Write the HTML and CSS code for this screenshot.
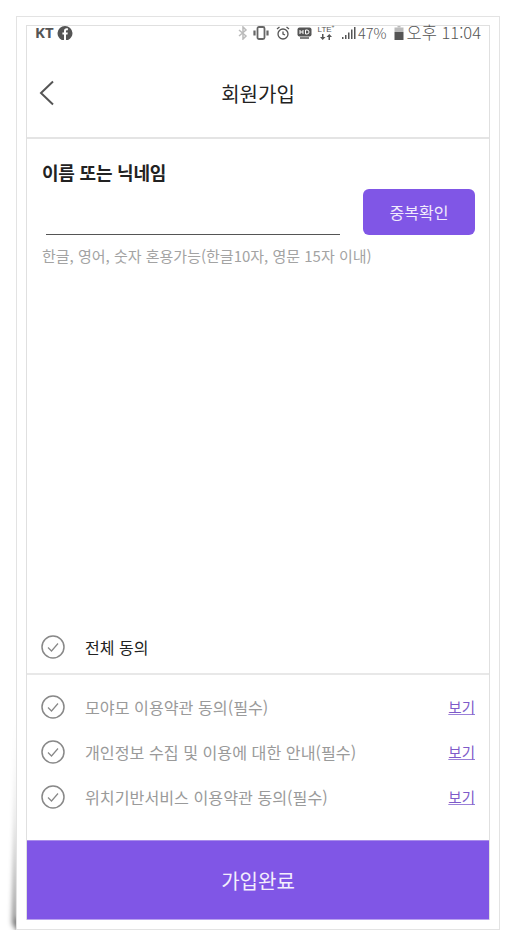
FILE: index.html
```html
<!DOCTYPE html>
<html lang="ko">
<head>
    <meta charset="UTF-8">
    <meta name="viewport" content="width=device-width, initial-scale=1.0">
    <title>회원가입</title>
    <link rel="stylesheet" href="styles.css">
</head>
<body>
    <div class="photo-frame">
        <div class="curl-shadow"></div>
        <div class="screen">
            <div class="status-bar">
                <div class="status-left">
                    <span class="carrier">KT</span>
                    <svg class="fb-icon" width="16" height="14" viewBox="0 0 16 14">
                        <path d="M8 0a7.5 7.5 0 0 1 7.5 7c0 3-1.6 5.600-4.500 7H4.800C2 12.600 .5 10 .5 7A7.500 7.500 0 0 1 8 0z" fill="#555"/>
                        <path d="M7 14V8.500H5.400V6.400H7V5c0-1.800 1-2.700 2.600-2.700h1.300v2H10c-.7 0-1 .3-1 1v1.100h1.800l-.3 2.100H9V14z" fill="#fff"/>
                    </svg>
                </div>
                <div class="status-right">
                    <svg width="10" height="14" viewBox="0 0 10 14" fill="none" stroke="#bbb" stroke-width="1.500"><path d="M1 4l7 6-3 3V1l3 3-7 6"/></svg>
                    <svg class="vibrate-icon" width="16" height="14" viewBox="0 0 16 14" fill="none" stroke="#666"><rect x="4.500" y="1" width="7" height="12" rx="1.500" stroke-width="1.800"/><path d="M1.500 4.500v5M14.500 4.500v5" stroke-width="2.200"/></svg>
                    <svg class="alarm-icon" width="14" height="14" viewBox="0 0 14 14" fill="none" stroke="#555" stroke-width="1.300"><circle cx="7" cy="8" r="5"/><path d="M7 5.500V8l2 1M1 3l2.500-2M13 3l-2.500-2"/></svg>
                    <svg class="hd-icon" width="15" height="14" viewBox="0 0 15 14"><rect x=".5" y="1.500" width="14" height="9" rx="2" fill="#555"/><path d="M3 12h9" stroke="#555" stroke-width="1.500"/><path d="M3 4v4M6 4v4M3 6h3M8.500 4v4h1.500a2 2 0 0 0 0-4z" fill="none" stroke="#fff"/></svg>
                    <div class="lte">
                        <span class="lte-text">LTE<sup>+</sup></span>
                        <svg width="14" height="6" viewBox="0 0 14 6" fill="#555"><path d="M3 0h1.500v3H6.500L3.700 6 1 3h2zM9.500 6H11V3h2L10.300 0 7.500 3h2z"/></svg>
                    </div>
                    <svg class="signal" width="15" height="14" viewBox="0 0 15 14" fill="#555"><path d="M1 11h1.500v2H1zM4 9h1.500v4H4zM7 6.500h1.500V13H7zM10 3.500h1.500V13H10zM13 1h1.500v12H13z"/></svg>
                    <span class="status-text percent">47%</span>
                    <svg class="battery" width="10" height="14" viewBox="0 0 10 14"><path d="M3.500 0h3v1.500h-3z" fill="#bbb"/><path d="M.5 1.500h9V6h-9z" fill="#bbb"/><path d="M.5 6h9v8h-9z" fill="#555"/></svg>
                    <span class="status-text clock">오후 11:04</span>
                </div>
            </div>

            <header class="top-bar">
                <svg class="back-icon" width="16" height="26" viewBox="0 0 16 26" fill="none" stroke="#555" stroke-width="2"><path d="M14 1.500L2 13l12 11.500"/></svg>
                <h1 class="page-title">회원가입</h1>
            </header>

            <main class="content">
                <section class="name-section">
                    <h2 class="field-title">이름 또는 닉네임</h2>
                    <div class="name-row">
                        <div class="name-input"></div>
                        <button class="check-btn">중복확인</button>
                    </div>
                    <p class="field-hint">한글, 영어, 숫자 혼용가능(한글10자, 영문 15자 이내)</p>
                </section>

                <section class="terms">
                    <div class="term-all">
                        <svg class="check-icon" width="24" height="24" viewBox="0 0 24 24" fill="none" stroke="#888" stroke-width="1.500"><circle cx="12" cy="12" r="11"/><path d="M7 12.500l3.500 3.500 6.500-7.500" stroke-width="1.200"/></svg>
                        <span class="term-all-text">전체 동의</span>
                    </div>
                    <ul class="term-list">
                        <li class="term-row">
                            <svg class="check-icon" width="24" height="24" viewBox="0 0 24 24" fill="none" stroke="#888" stroke-width="1.500"><circle cx="12" cy="12" r="11"/><path d="M7 12.500l3.500 3.500 6.500-7.500" stroke-width="1.200"/></svg>
                            <span class="term-text">모야모 이용약관 동의(필수)</span>
                            <a class="term-link" href="#">보기</a>
                        </li>
                        <li class="term-row">
                            <svg class="check-icon" width="24" height="24" viewBox="0 0 24 24" fill="none" stroke="#888" stroke-width="1.500"><circle cx="12" cy="12" r="11"/><path d="M7 12.500l3.500 3.500 6.500-7.500" stroke-width="1.200"/></svg>
                            <span class="term-text">개인정보 수집 및 이용에 대한 안내(필수)</span>
                            <a class="term-link" href="#">보기</a>
                        </li>
                        <li class="term-row">
                            <svg class="check-icon" width="24" height="24" viewBox="0 0 24 24" fill="none" stroke="#888" stroke-width="1.500"><circle cx="12" cy="12" r="11"/><path d="M7 12.500l3.500 3.500 6.500-7.500" stroke-width="1.200"/></svg>
                            <span class="term-text">위치기반서비스 이용약관 동의(필수)</span>
                            <a class="term-link" href="#">보기</a>
                        </li>
                    </ul>
                </section>
            </main>

            <button class="submit-btn">가입완료</button>
        </div>
    </div>
</body>
</html>
```

FILE: styles.css
```css
*{
    box-sizing: border-box;
}
body{
    margin: 0;
    padding: 16px 16px 0;
    background-color: #fff;
    font-family: "Noto Sans CJK KR", "Noto Sans", sans-serif;
}
.photo-frame{
    position: relative;
    width: 484px;
    height: 914px;
    padding: 8px 9px 9px;
    border: 1px solid #e3e3e3;
    background-color: #fff;
}
/* page curl shadow, bottom left corner */
.curl-shadow{
    position: absolute;
    left: -7px;
    bottom: -9px;
    width: 180px;
    height: 232px;
    z-index: -1;
    filter: blur(2.500px);
}
.curl-shadow::before{
    content: "";
    display: block;
    height: 100%;
    background: linear-gradient(to bottom, rgba(0, 0, 0, 0) 0%, rgba(0, 0, 0, 0.2) 50%, rgba(0, 0, 0, 0.55) 100%);
    clip-path: polygon(7px 0, 2px 218px, 12px 231px, 170px 224px, 7px 212px);
}
.screen{
    display: flex;
    flex-direction: column;
    height: 100%;
    background-color: #fff;
    border: 1px solid #e0e0e0;
    border-bottom: 0;
}
.status-bar{
    display: flex;
    justify-content: space-between;
    align-items: center;
    height: 13px;
    padding: 0 8px;
    color: #555;
}
.status-left{
    display: flex;
    align-items: center;
}
.carrier{
    font-size: 15px;
    font-weight: 700;
    font-family: "Noto Sans", sans-serif;
    line-height: 13px;
}
.fb-icon{
    margin-left: 3px;
}
.status-right{
    display: flex;
    align-items: center;
}
.vibrate-icon{
    margin-left: 5px;
}
.alarm-icon{
    margin-left: 7px;
}
.hd-icon{
    margin-left: 7px;
}
.lte{
    display: flex;
    flex-direction: column;
    align-items: center;
    margin-left: 5px;
    width: 18px;
    height: 14px;
}
.lte-text{
    font-size: 8px;
    line-height: 8px;
    font-family: "Liberation Sans", sans-serif;
}
.lte-text sup{
    font-size: 5px;
    line-height: 0;
}
.signal{
    margin-left: 6px;
}
.status-text{
    font-size: 16.500px;
    font-weight: 300;
    line-height: 13px;
    white-space: nowrap;
}
.percent{
    margin-left: 2px;
    font-size: 14.500px;
}
.battery{
    margin-left: 7px;
}
.clock{
    margin-left: 3px;
}
.top-bar{
    position: relative;
    display: flex;
    justify-content: center;
    align-items: center;
    height: 100px;
    padding-top: 10px;
    border-bottom: 2px solid #e4e4e4;
}
.back-icon{
    position: absolute;
    left: 12px;
    top: 41px;
}
.page-title{
    margin: 0;
    font-size: 20px;
    font-weight: 400;
    color: #222;
}
.content{
    flex: 1;
    display: flex;
    flex-direction: column;
    justify-content: space-between;
}
.name-section{
    padding: 20px 14px 0 15px;
}
.field-title{
    margin: 0;
    font-size: 18px;
    font-weight: 700;
    line-height: 26px;
    letter-spacing: -0.2px;
    color: #222;
}
.name-row{
    display: flex;
    justify-content: space-between;
    align-items: flex-end;
    margin-top: 4px;
}
.name-input{
    width: 294px;
    height: 46px;
    margin-left: 4px;
    border-bottom: 1px solid #555;
}
.check-btn{
    width: 112px;
    height: 46px;
    border: 0;
    border-radius: 6px;
    background-color: #8056e6;
    color: #f0eafc;
    font-family: inherit;
    font-size: 16px;
}
.field-hint{
    margin: 9px 0 0;
    font-size: 15px;
    line-height: 24px;
    color: #a3a3a3;
    white-space: nowrap;
}
.terms{
    padding-bottom: 21px;
}
.term-all{
    display: flex;
    align-items: center;
    height: 45px;
    padding: 0 14px 10px 14px;
    border-bottom: 2px solid #e8e8e8;
}
.term-all-text{
    margin-left: 20px;
    font-size: 16px;
    color: #222;
}
.term-list{
    margin: 0;
    padding: 9px 14px 0 14px;
    list-style: none;
}
.term-row{
    display: flex;
    align-items: center;
    height: 45px;
}
.term-text{
    flex: 1;
    margin-left: 20px;
    font-size: 16.150px;
    color: #9a9a9a;
}
.term-link{
    font-size: 14.500px;
    color: #7e5bc9;
    text-decoration-color: #9a80d8;
}
.submit-btn{
    height: 80px;
    flex-shrink: 0;
    padding-top: 2px;
    border: 0;
    border-top: 1px solid #a98ceb;
    border-bottom: 1px solid #b9a2ee;
    background-color: #8056e6;
    color: #f3eefc;
    font-family: inherit;
    font-size: 20px;
}
```
